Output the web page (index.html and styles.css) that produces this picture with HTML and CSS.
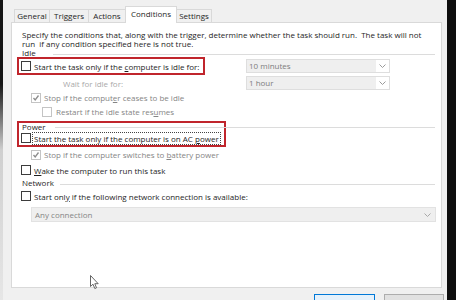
FILE: index.html
```html
<!DOCTYPE html>
<html lang="en">
<head>
    <meta charset="UTF-8">
    <title>Task Properties - Conditions</title>
    <link rel="stylesheet" href="styles.css">
</head>
<body>

    <div class="screen">
        <div class="edge-left"></div>

        <div class="dialog">
            <div class="tabs">
                <span class="tab tab-general">General</span>
                <span class="tab tab-triggers">Triggers</span>
                <span class="tab tab-actions">Actions</span>
                <span class="tab tab-conditions active">Conditions</span>
                <span class="tab tab-settings">Settings</span>
            </div>

            <div class="panel">
                <p class="intro">Specify the conditions that, along with the trigger, determine whether the task should run.&nbsp; The task will not<br>run&nbsp; if any condition specified here is not true.</p>

                <!-- Idle -->
                <div class="group-head head-idle"><span>Idle</span></div>
                <div class="idle-grid">
                    <div class="mark mark-idle">
                        <div class="check">
                            <span class="box"></span>
                            <span class="label">Start the task only if the <u>c</u>omputer is idle for:</span>
                        </div>
                    </div>
                    <div class="combo">
                        <span class="field">10 minutes</span>
                        <span class="arrow"><svg width="7" height="4" viewBox="0 0 7 4"><polyline points="0.5,0.5 3.5,3.5 6.5,0.5" fill="none" stroke="#9a9a9a" stroke-width="1"/></svg></span>
                    </div>
                    <div class="wait-label">Wait for idle for:</div>
                    <div class="combo">
                        <span class="field">1 hour</span>
                        <span class="arrow"><svg width="7" height="4" viewBox="0 0 7 4"><polyline points="0.5,0.5 3.5,3.5 6.5,0.5" fill="none" stroke="#9a9a9a" stroke-width="1"/></svg></span>
                    </div>
                </div>
                <div class="check lvl1 disabled row-stop">
                    <span class="box checked"><svg width="8" height="8" viewBox="0 0 8 8"><polyline points="1.5,4 3.2,6 6.5,1.5" fill="none" stroke="#8c8c8c" stroke-width="1.3"/></svg></span>
                    <span class="label">Stop if the comput<u>e</u>r ceases to be idle</span>
                </div>
                <div class="check lvl2 disabled row-restart">
                    <span class="box"></span>
                    <span class="label">Restart if the idle state res<u>u</u>mes</span>
                </div>

                <!-- Power -->
                <div class="mark mark-power">
                    <div class="group-head head-power"><span>Power</span></div>
                    <div class="check row-ac">
                        <span class="box"></span>
                        <span class="label focus">Start the task only if the computer is on AC <u>p</u>ower</span>
                    </div>
                </div>
                <div class="check lvl1 disabled row-battery">
                    <span class="box checked"><svg width="8" height="8" viewBox="0 0 8 8"><polyline points="1.5,4 3.2,6 6.5,1.5" fill="none" stroke="#8c8c8c" stroke-width="1.3"/></svg></span>
                    <span class="label">Stop if the computer switches to <u>b</u>attery power</span>
                </div>
                <div class="check row-wake">
                    <span class="box"></span>
                    <span class="label"><u>W</u>ake the computer to run this task</span>
                </div>

                <!-- Network -->
                <div class="group-head head-network"><span>Network</span></div>
                <div class="check row-net">
                    <span class="box"></span>
                    <span class="label">Start onl<u>y</u> if the following network connection is available:</span>
                </div>
                <div class="combo combo-wide">
                    <span class="field">Any connection</span>
                    <span class="arrow"><svg width="7" height="4" viewBox="0 0 7 4"><polyline points="0.5,0.5 3.5,3.5 6.5,0.5" fill="none" stroke="#a8a8a8" stroke-width="1"/></svg></span>
                </div>

                <svg class="cursor" width="10" height="15" viewBox="0 0 10 15">
                    <path d="M0.5,0.5 L0.5,11.5 L3,9.2 L4.8,13.5 L6.5,12.8 L4.8,8.7 L8.2,8.7 Z" fill="#fff" stroke="#555" stroke-width="0.9" stroke-linejoin="round"/>
                </svg>
            </div>

            <div class="buttons">
                <span class="btn btn-default">OK</span>
                <span class="btn">Cancel</span>
            </div>
        </div>

        <div class="edge-right"></div>
    </div>

</body>
</html>
```

FILE: styles.css
```css
/* Task properties dialog, Conditions tab */

* { box-sizing: border-box; }

body {
    margin: 0;
    background: #0e0e0e;
    font-family: "Open Sans", "Noto Sans", sans-serif;
    font-size: 8px;
    color: #1e1e1e;
}

.screen {
    display: flex;
    width: 456px;
    height: 300px;
    overflow: hidden;
}
.edge-left {
    width: 3px;
    background: linear-gradient(#151515 0, #151515 28%, #cfcfcf 50%, #e6e6e6 100%);
}
.edge-right { flex: 1; background: #0e0e0e; }

.dialog {
    width: 444px;
    background: #f0f0f0;
    padding: 6px 0 0 8px;
}

/* --- tabs --- */
.tabs {
    display: flex; align-items: flex-end;
    height: 16px; margin-left: 3px;
}
.tab {
    height: 13px; line-height: 12px; text-align: center;
    border: 1px solid #d9d9d9; border-bottom: none;
    background: #f0f0f0; color: #1e1e1e;
    margin-right: -1px;
}
.tab-general { width: 36px; }
.tab-triggers { width: 40px; }
.tab-actions { width: 38px; }
.tab-conditions { width: 52px; }
.tab-settings { width: 36px; }
.tab.active {
    height: 17px; line-height: 14px;
    background: #fff; margin-bottom: -1px;
    position: relative; z-index: 1;
}

/* --- panel --- */
.panel {
    position: relative;
    width: 431px; height: 266px;
    background: #fff;
    border: 1px solid #d9d9d9;
    padding: 7px 6px 0 9px;
}
.intro {
    margin: 0; padding-left: 1px;
    line-height: 9px; white-space: nowrap;
}

.group-head {
    display: flex; align-items: center;
    padding-left: 1px; white-space: nowrap;
}
.group-head::after {
    content: ""; flex: 1; height: 1px; background: #dcdcdc;
}
.head-idle { height: 9px; line-height: 9px; }
.head-idle::after { margin-left: 17px; margin-top: 3px; }
.head-power { height: 8px; line-height: 8px; width: 416px; padding-left: 3px; }
.head-power::after { margin-left: 9px; }
.head-network { height: 10px; line-height: 10px; }
.head-network::after { margin-left: 6px; margin-top: 2px; }

/* red annotation boxes */
.mark {
    border: 2px solid #c0252c;
    margin-left: -4px;
}
.mark-idle { width: 188px; height: 18px; padding-left: 2px; }
.mark-power { width: 209px; height: 26px; margin-top: 2px; }
.mark-power .check { padding-left: 2px; }

.idle-grid {
    display: grid;
    grid-template-columns: 225px 144px;
    grid-template-rows: 18px 16px;
    align-items: center;
}
.idle-grid .mark-idle .check { height: 14px; }
.wait-label { padding-left: 42px; color: #a9a9a9; }

/* --- checkboxes --- */
.check {
    display: flex; align-items: center;
    white-space: nowrap;
}
.check .box {
    flex: none;
    width: 10px; height: 10px;
    border: 1px solid #3c3c3c;
    background: #fff;
    margin-right: 3px;
    display: flex; align-items: center; justify-content: center;
}
.check.disabled .box { border-color: #c4c4c4; }
.check.disabled .label { color: #858585; }
.lvl1 { padding-left: 10px; }
.lvl2 { padding-left: 21px; }
.lvl2 .box { margin-right: 4px; }

.row-stop { height: 13px; }
.row-restart { height: 15px; }
.row-ac { height: 14px; }
.row-battery { height: 15px; }
.row-wake { height: 16px; }
.row-net { height: 16px; }

.label u { text-decoration-thickness: 1px; text-underline-offset: 1px; }
.focus {
    outline: 1px dotted #444;
    padding: 0 1px;
    line-height: 11px;
    margin-left: -1px;
}

/* --- combo boxes --- */
.combo {
    display: flex;
    height: 14px;
    border: 1px solid #dedede;
    background: #fff;
}
.combo .field {
    flex: 1;
    background: #efefef;
    color: #7d7d7d;
    line-height: 12px;
    padding-left: 2px;
}
.combo .arrow {
    width: 13px;
    display: flex; align-items: center; justify-content: center;
}
.combo-wide {
    width: 405px; height: 15px;
    margin: 3px 0 0 10px;
    background: #efefef;
    border-color: #e2e2e2;
}
.combo-wide .field { line-height: 13px; padding-left: 3px; color: #858585; }
.combo-wide .arrow { width: 16px; }

.cursor {
    position: absolute;
    left: 78px; top: 252px;
}

/* --- bottom buttons --- */
.buttons {
    display: flex; gap: 9px;
    margin-top: 6px; padding-left: 303px;
}
.btn {
    width: 60px; height: 20px;
    border: 1px solid #adadad;
    background: #e1e1e1;
    text-align: center;
    line-height: 16px; padding-top: 1px;
}
.btn-default {
    width: 61px;
    border-color: #0078d7;
    background: #e5f1fb;
}
```
